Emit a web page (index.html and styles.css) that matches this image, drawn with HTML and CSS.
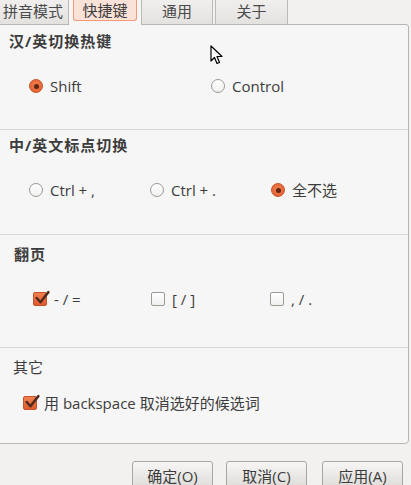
FILE: index.html
```html
<!DOCTYPE html>
<html lang="zh-CN">
<head>
<meta charset="utf-8">
<title>快捷键</title>
<link rel="stylesheet" href="styles.css">
</head>
<body>
<div class="tabs">
  <div class="tab tab-first">拼音模式</div>
  <div class="tab tab-active"><span class="tab-hl">快捷键</span></div>
  <div class="tab tab-third">通用</div>
  <div class="tab tab-fourth">关于</div>
</div>
<div class="panel">
  <section class="sec sec-1">
    <div class="heading">汉/英切换热键</div>
    <div class="row">
      <label class="opt w182"><span class="radio on"></span><span class="lbl">Shift</span></label>
      <label class="opt"><span class="radio"></span><span class="lbl">Control</span></label>
    </div>
  </section>
  <section class="sec sec-2">
    <div class="heading">中/英文标点切换</div>
    <div class="row">
      <label class="opt w121"><span class="radio"></span><span class="lbl">Ctrl + ,</span></label>
      <label class="opt w121"><span class="radio"></span><span class="lbl">Ctrl + .</span></label>
      <label class="opt"><span class="radio on"></span><span class="lbl">全不选</span></label>
    </div>
  </section>
  <section class="sec sec-3">
    <div class="heading">翻页</div>
    <div class="row">
      <label class="opt w118"><span class="check on"><svg viewBox="0 0 16 16" class="tick"><path d="M3.5 7.5 L7 11.5 L14.5 2"/></svg></span><span class="lbl">- / =</span></label>
      <label class="opt w119"><span class="check"></span><span class="lbl">[ / ]</span></label>
      <label class="opt"><span class="check"></span><span class="lbl">, / .</span></label>
    </div>
  </section>
  <section class="sec sec-4">
    <div class="heading plain">其它</div>
    <div class="row">
      <label class="opt"><span class="check on"><svg viewBox="0 0 16 16" class="tick"><path d="M3.5 7.5 L7 11.5 L14.5 2"/></svg></span><span class="lbl">用 backspace 取消选好的候选词</span></label>
    </div>
  </section>
</div>
<div class="buttons">
  <button class="btn">确定(O)</button>
  <button class="btn btn-2">取消(C)</button>
  <button class="btn btn-3">应用(A)</button>
</div>
<svg class="cursor" viewBox="0 0 13 20" width="13" height="20"><path d="M1 1 L1 16 L4.5 12.5 L7 18.5 L9.5 17.5 L7 11.5 L12 11.5 Z" fill="#fff" stroke="#000" stroke-width="1.2" stroke-linejoin="round"/></svg>
</body>
</html>
```
FILE: styles.css
```css
html, body {
  margin: 0;
  padding: 0;
}
body {
  width: 411px;
  height: 485px;
  overflow: hidden;
  position: relative;
  background: #f2f1f0;
  color: #3c3c3c;
  font-family: "Open Sans", "Noto Sans CJK SC", sans-serif;
  font-size: 15px;
  line-height: 20px;
}
.tabs {
  display: flex;
  align-items: flex-start;
  height: 24px;
}
.tab {
  box-sizing: border-box;
  height: 24px;
  text-align: center;
  line-height: 23px;
  background: linear-gradient(#f0efee, #e4e2df);
  border: 1px solid #bdb9b4;
  border-top: none;
  border-bottom: none;
  color: #4a4a4a;
}
.tab-first {
  width: 71px;
  margin-left: -2px;
  text-align: left;
  padding-left: 4px;
}
.tab-active {
  width: 72px;
  height: 25px;
  background: #f6f6f6;
  border: none;
  position: relative;
  z-index: 1;
  margin-bottom: -1px;
  padding: 0 4px 0 4px;
}
.tab-hl {
  display: block;
  box-sizing: border-box;
  height: 21px;
  line-height: 20px;
  background: #fbe2d8;
  border: 1px solid #f09a78;
  border-top: none;
  border-radius: 0 0 3px 3px;
  color: #3c3c3c;
}
.tab-third {
  width: 72px;
}
.tab-fourth {
  width: 73px;
  margin-left: 2px;
}
.panel {
  box-sizing: border-box;
  margin-left: -2px;
  width: 411px;
  height: 420px;
  background: #f6f6f6;
  border: 1px solid #b9b5b0;
  border-radius: 0 3px 4px 0;
}
.sec {
  box-sizing: border-box;
}
.sec + .sec {
  border-top: 1px solid #d9d7d4;
}
.sec-1 {
  height: 104px;
  padding-top: 6px;
  padding-left: 10px;
}
.sec-2 {
  height: 105px;
  padding-top: 5px;
  padding-left: 10px;
}
.sec-3 {
  height: 113px;
  padding-top: 9px;
  padding-left: 15px;
}
.sec-4 {
  padding-top: 9px;
  padding-left: 14px;
}
.heading {
  font-weight: bold;
  letter-spacing: 1px;
  height: 20px;
}
.heading.plain {
  font-weight: normal;
  letter-spacing: 0;
}
.sec-1 .row, .sec-2 .row, .sec-3 .row {
  margin-top: 25px;
}
.sec-4 .row {
  margin-top: 16px;
}
.row {
  display: flex;
  align-items: center;
  height: 20px;
}
.sec-1 .row, .sec-2 .row {
  padding-left: 20px;
}
.sec-3 .row {
  padding-left: 19px;
}
.sec-4 .row {
  padding-left: 10px;
}
.opt {
  display: flex;
  align-items: center;
  flex: none;
}
.w182 { width: 182px; }
.w121 { width: 121px; }
.w118 { width: 118px; }
.w119 { width: 119px; }
.lbl {
  margin-left: 7px;
  white-space: pre;
}
.radio {
  box-sizing: border-box;
  width: 14px;
  height: 14px;
  border-radius: 50%;
  border: 1px solid #9d9993;
  background: linear-gradient(#ffffff, #f1f0ef);
  display: flex;
  align-items: center;
  justify-content: center;
  flex: none;
}
.radio.on {
  border-color: #c4532b;
  background: radial-gradient(circle at 50% 40%, #f2804f, #e05a2c);
}
.radio.on::after {
  content: "";
  width: 5px;
  height: 5px;
  border-radius: 50%;
  background: #5e2614;
}
.check {
  box-sizing: border-box;
  width: 14px;
  height: 14px;
  border-radius: 2px;
  border: 1px solid #9d9993;
  background: linear-gradient(#ffffff, #f1f0ef);
  flex: none;
  position: relative;
}
.check.on {
  border-color: #c4532b;
  background: linear-gradient(#f2804f, #e05a2c);
}
.tick {
  position: absolute;
  left: -1px;
  top: -3px;
  width: 17px;
  height: 17px;
  fill: none;
  stroke: #4e2a1e;
  stroke-width: 2.3;
  stroke-linecap: round;
  stroke-linejoin: round;
}
.buttons {
  display: flex;
  justify-content: flex-end;
  padding-right: 8px;
  margin-top: 17px;
}
.btn {
  box-sizing: border-box;
  width: 81px;
  height: 28px;
  border: 1px solid #a9a5a0;
  border-radius: 3px;
  background: linear-gradient(#f7f6f5, #dedcd8);
  color: #3c3c3c;
  font-family: "Open Sans", "Noto Sans CJK SC", sans-serif;
  font-size: 15px;
  line-height: 20px;
  padding: 2px 0 0 0;
  margin: 0;
}
.btn-2 { margin-left: 13px; }
.btn-3 { margin-left: 15px; }
.cursor {
  position: absolute;
  left: 210px;
  top: 45px;
}
```
